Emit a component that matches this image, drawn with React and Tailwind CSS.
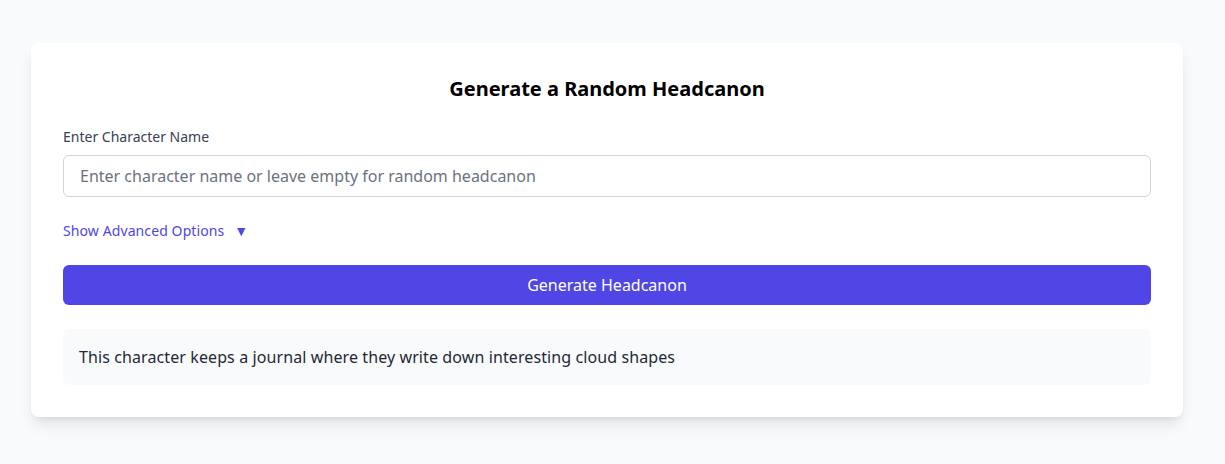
function App() {
  return (
    <div
      className="min-h-[464px] bg-[#f9fafb] pt-[43px] pl-[31px]"
      style={{ fontFamily: '"Noto Sans", "Open Sans", sans-serif' }}
    >
      <div className="w-[1152px] bg-white rounded-lg shadow-lg p-8">
        <h2 className="text-xl font-bold text-center text-black mb-6">
          Generate a Random Headcanon
        </h2>

        <label className="block text-sm text-[#374151] mb-2">
          Enter Character Name
        </label>
        <input
          type="text"
          placeholder="Enter character name or leave empty for random headcanon"
          className="w-full border border-[#d1d5db] rounded-md px-4 py-2 text-base text-[#1f2937] placeholder-[#6b7280] outline-none"
        />

        <button className="mt-6 flex items-center gap-2.5 text-sm text-[#4f46e5] tracking-[0.1px]">
          <span>Show Advanced Options</span>
          <span className="text-sm">▼</span>
        </button>

        <button className="mt-6 w-full bg-[#4f46e5] text-white text-base py-2 rounded-md">
          Generate Headcanon
        </button>

        <div className="mt-6 bg-[#f9fafb] rounded-md p-4 text-base text-[#1f2937] tracking-[0.1px]">
          This character keeps a journal where they write down interesting
          cloud shapes
        </div>
      </div>
    </div>
  );
}

export default App;
